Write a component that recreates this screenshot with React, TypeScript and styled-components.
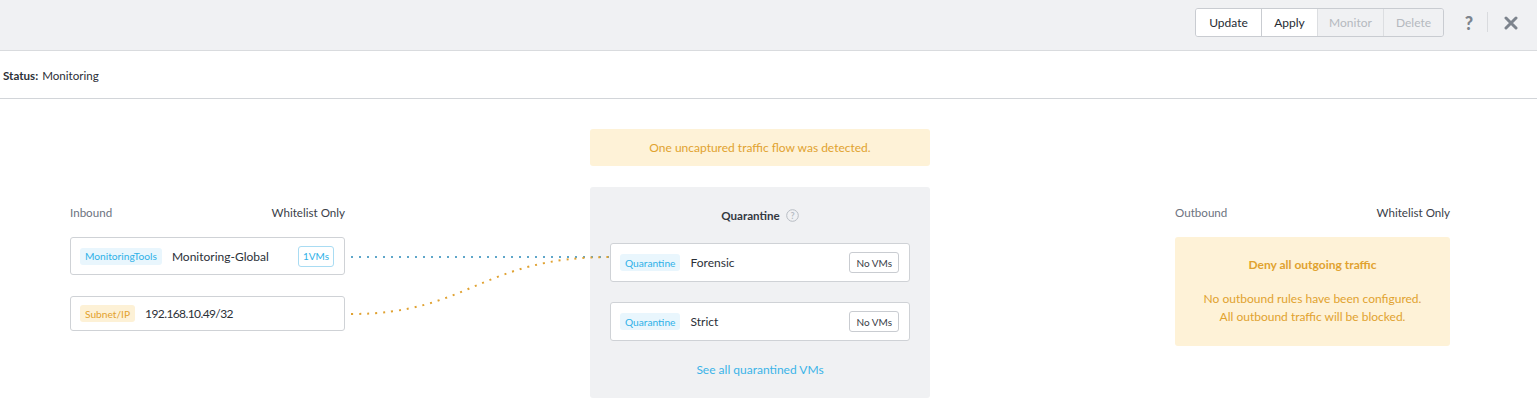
import React from "react";
import styled, { createGlobalStyle } from "styled-components";

const Global = createGlobalStyle`
  html, body { margin: 0; padding: 0; background: #fff; }
  body { font-family: "Lato", "Open Sans", sans-serif; color: #2b3038; -webkit-font-smoothing: antialiased; }
  * { box-sizing: border-box; }
`;

const Page = styled.div`
  width: 1537px;
  height: 416px;
  overflow: hidden;
  display: flex;
  flex-direction: column;
`;

const TopBar = styled.div`
  height: 51px;
  flex: none;
  background: #f0f1f3;
  border-bottom: 1px solid #d9dbde;
  display: flex;
  align-items: flex-start;
  justify-content: flex-end;
  padding: 8px 16px 0 0;
`;

const ButtonGroup = styled.div`
  display: flex;
  height: 29px;
  border: 1px solid #c9ccd1;
  border-radius: 3px;
  overflow: hidden;
`;

const Btn = styled.button<{ $w: number; $disabled?: boolean }>`
  width: ${(p) => p.$w}px;
  height: 100%;
  border: none;
  border-left: 1px solid ${(p) => (p.$disabled ? "#dcdee1" : "#c9ccd1")};
  &:first-child { border-left: none; }
  background: ${(p) => (p.$disabled ? "#f0f1f3" : "#ffffff")};
  color: ${(p) => (p.$disabled ? "#b5b9bf" : "#262b33")};
  font-family: inherit;
  font-size: 12px;
  padding: 0;
`;

const IconButton = styled.div<{ $size: number; $ml?: number }>`
  width: 20px;
  height: 29px;
  margin-left: ${(p) => p.$ml ?? 0}px;
  display: flex;
  align-items: center;
  justify-content: center;
  color: #7d848d;
  font-weight: 900;
  font-size: ${(p) => p.$size}px;
`;

const Divider = styled.div`
  width: 1px;
  height: 20px;
  margin: 4px 13px 0 8px;
  background: #d9dbde;
`;

const StatusRow = styled.div`
  height: 48px;
  flex: none;
  border-bottom: 1px solid #d2d5d9;
  display: flex;
  align-items: center;
  padding: 2px 0 0 3px;
  font-size: 11.6px;
  color: #2b3038;
`;

const StatusLabel = styled.span`
  font-weight: 700;
  margin-right: 4px;
`;

const Main = styled.div`
  position: relative;
  display: flex;
  gap: 245px;
  padding: 30px 0 0 70px;
`;

const SideColumn = styled.div`
  width: 275px;
  padding-top: 77px;
  display: flex;
  flex-direction: column;
`;

const ColumnHeader = styled.div`
  display: flex;
  justify-content: space-between;
  font-size: 11.6px;
  line-height: 14px;
  margin-bottom: 17px;
`;

const HeaderLeft = styled.span`
  color: #6c7380;
`;
const HeaderRight = styled.span`
  color: #3a4048;
`;

const Card = styled.div<{ $h: number; $mb?: number }>`
  height: ${(p) => p.$h}px;
  margin-bottom: ${(p) => p.$mb ?? 0}px;
  background: #fff;
  border: 1px solid #cfd2d6;
  border-radius: 3px;
  display: flex;
  align-items: center;
  padding: 0 10px 0 9px;
  font-size: 12px;
  color: #2b3038;
`;

const Tag = styled.span<{ $tone: "blue" | "orange" }>`
  height: 17px;
  display: inline-flex;
  align-items: center;
  padding: 0 5px;
  border-radius: 3px;
  font-size: 10.2px;
  background: ${(p) => (p.$tone === "blue" ? "#e9f6fd" : "#fdf1d6")};
  color: ${(p) => (p.$tone === "blue" ? "#2fb1e8" : "#e3a12c")};
  margin-right: 10px;
`;

const Name = styled.span<{ $tight?: boolean }>`
  flex: 1;
  letter-spacing: ${(p) => (p.$tight ? "-0.6px" : "0")};
`;

const Count = styled.span<{ $tone: "blue" | "gray" }>`
  height: 21px;
  display: inline-flex;
  align-items: center;
  padding: 0 ${(p) => (p.$tone === "blue" ? 4 : 6)}px;
  border-radius: 3px;
  font-size: 10px;
  border: 1px solid ${(p) => (p.$tone === "blue" ? "#a9dcf3" : "#c9ccd1")};
  color: ${(p) => (p.$tone === "blue" ? "#2fb1e8" : "#3a4048")};
`;

const MiddleColumn = styled.div`
  width: 340px;
  display: flex;
  flex-direction: column;
`;

const Banner = styled.div`
  height: 37px;
  background: #fef2d7;
  border-radius: 3px;
  display: flex;
  align-items: center;
  justify-content: center;
  font-size: 12px;
  color: #e1a22f;
  margin-bottom: 21px;
`;

const Panel = styled.div`
  height: 211px;
  background: #f0f1f3;
  border-radius: 3px;
  padding: 0 20px;
  display: flex;
  flex-direction: column;
`;

const PanelTitle = styled.div`
  height: 56px;
  display: flex;
  align-items: center;
  justify-content: center;
  gap: 6px;
  font-size: 11.6px;
  font-weight: 700;
  color: #33383f;
  padding-top: 1px;
`;

const Link = styled.div`
  margin-top: 21px;
  text-align: center;
  font-size: 12px;
  color: #3bb4e8;
`;

const Warn = styled.div`
  height: 109px;
  background: #fef2d7;
  border-radius: 3px;
  display: flex;
  flex-direction: column;
  align-items: center;
  padding-top: 21px;
  font-size: 12px;
  color: #e1a22f;
`;

const WarnTitle = styled.div`
  font-weight: 700;
  line-height: 14px;
  margin-bottom: 18px;
`;

const WarnLine = styled.div`
  line-height: 18px;
`;

const Connectors = styled.svg`
  position: absolute;
  left: 0;
  top: 0;
  pointer-events: none;
`;

function HelpIcon() {
  return (
    <svg width="13" height="13" viewBox="0 0 13 13">
      <circle cx="6.5" cy="6.5" r="5.8" fill="none" stroke="#b7bcc3" strokeWidth="1" />
      <text x="6.5" y="9.6" textAnchor="middle" fontSize="9" fill="#b7bcc3" fontFamily="Lato, sans-serif">?</text>
    </svg>
  );
}

function CloseIcon() {
  return (
    <svg width="14" height="14" viewBox="0 0 14 14">
      <path d="M2 2 L12 12 M12 2 L2 12" stroke="#7d848d" strokeWidth="3" strokeLinecap="round" />
    </svg>
  );
}

export default function App() {
  return (
    <Page>
      <Global />
      <TopBar>
        <ButtonGroup>
          <Btn $w={65}>Update</Btn>
          <Btn $w={56}>Apply</Btn>
          <Btn $w={66} $disabled>Monitor</Btn>
          <Btn $w={60} $disabled>Delete</Btn>
        </ButtonGroup>
        <IconButton $size={18} $ml={15}>?</IconButton>
        <Divider />
        <IconButton $size={14}>
          <CloseIcon />
        </IconButton>
      </TopBar>
      <StatusRow>
        <StatusLabel>Status:</StatusLabel>Monitoring
      </StatusRow>
      <Main>
        <SideColumn>
          <ColumnHeader>
            <HeaderLeft>Inbound</HeaderLeft>
            <HeaderRight>Whitelist Only</HeaderRight>
          </ColumnHeader>
          <Card $h={38} $mb={21}>
            <Tag $tone="blue">MonitoringTools</Tag>
            <Name>Monitoring-Global</Name>
            <Count $tone="blue">1VMs</Count>
          </Card>
          <Card $h={35}>
            <Tag $tone="orange">Subnet/IP</Tag>
            <Name $tight>192.168.10.49/32</Name>
          </Card>
        </SideColumn>
        <MiddleColumn>
          <Banner>One uncaptured traffic flow was detected.</Banner>
          <Panel>
            <PanelTitle>
              Quarantine <HelpIcon />
            </PanelTitle>
            <Card $h={39} $mb={20}>
              <Tag $tone="blue">Quarantine</Tag>
              <Name>Forensic</Name>
              <Count $tone="gray">No VMs</Count>
            </Card>
            <Card $h={39}>
              <Tag $tone="blue">Quarantine</Tag>
              <Name>Strict</Name>
              <Count $tone="gray">No VMs</Count>
            </Card>
            <Link>See all quarantined VMs</Link>
          </Panel>
        </MiddleColumn>
        <SideColumn>
          <ColumnHeader>
            <HeaderLeft>Outbound</HeaderLeft>
            <HeaderRight>Whitelist Only</HeaderRight>
          </ColumnHeader>
          <Warn>
            <WarnTitle>Deny all outgoing traffic</WarnTitle>
            <WarnLine>No outbound rules have been configured.</WarnLine>
            <WarnLine>All outbound traffic will be blocked.</WarnLine>
          </Warn>
        </SideColumn>
        <Connectors width="1537" height="317" viewBox="0 99 1537 317">
          <path d="M351 257 L611 257" stroke="#5fa6c9" strokeWidth="2" strokeDasharray="2 6" fill="none" />
          <path d="M351 314 C470 314 480 257 611 257" stroke="#e0a232" strokeWidth="2" strokeDasharray="2 6" fill="none" />
        </Connectors>
      </Main>
    </Page>
  );
}
